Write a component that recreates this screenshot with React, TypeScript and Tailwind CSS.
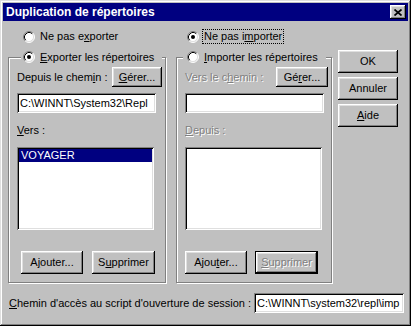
import React from "react";

const raised =
  "bg-[#c0c0c0] shadow-[inset_-1px_-1px_#000,inset_1px_1px_#fff,inset_-2px_-2px_#808080,inset_2px_2px_#dfdfdf]";
const sunken =
  "bg-white shadow-[inset_1px_1px_#808080,inset_-1px_-1px_#fff,inset_2px_2px_#000,inset_-2px_-2px_#dfdfdf]";
const grayed = "text-[#808080] [text-shadow:1px_1px_0_#fff]";

const Radio = ({ checked }: { checked?: boolean }) => (
  <svg width="12" height="12" viewBox="0 0 12 12" className="shrink-0">
    <circle cx="6" cy="6" r="5" fill="#fff" />
    <path d="M2.11 9.89 A5.5 5.5 0 0 1 9.89 2.11" stroke="#808080" fill="none" />
    <path d="M9.89 2.11 A5.5 5.5 0 0 1 2.11 9.89" stroke="#fff" fill="none" />
    <path d="M2.82 9.18 A4.5 4.5 0 0 1 9.18 2.82" stroke="#000" fill="none" />
    <path d="M9.18 2.82 A4.5 4.5 0 0 1 2.82 9.18" stroke="#dfdfdf" fill="none" />
    {checked && <circle cx="6" cy="6" r="2" fill="#000" />}
  </svg>
);

const Button = ({ children, className = "", disabled }: any) => (
  <div className={`${raised} h-[23px] flex items-center justify-center ${disabled ? grayed : ""} ${className}`}>
    {children}
  </div>
);

const Group = ({ label, children, className = "" }: any) => (
  <div className={`relative h-[226px] border border-[#808080] shadow-[inset_1px_1px_#fff,1px_1px_#fff] ${className}`}>
    {label}
    {children}
  </div>
);

export default function App() {
  return (
    <div className="w-[411px] h-[326px] p-[3px] flex flex-col bg-[#c0c0c0] text-black text-[11px] leading-[13px] font-['Liberation_Sans',Arial,sans-serif] shadow-[inset_-1px_-1px_#000,inset_1px_1px_#dfdfdf,inset_-2px_-2px_#808080,inset_2px_2px_#fff]">
      {/* title bar */}
      <div className="h-[18px] bg-[#000080] flex items-center pl-[3px] pr-[2px]">
        <span className="text-white font-bold text-[12px]">Duplication de répertoires</span>
        <div className={`${raised} ml-auto w-[16px] h-[14px] flex items-center justify-center`}>
          <svg width="8" height="7" viewBox="0 0 8 7">
            <path d="M0.5 0.5 L7.5 6.5 M7.5 0.5 L0.5 6.5" stroke="#000" strokeWidth="1.7" />
          </svg>
        </div>
      </div>

      <div className="flex pl-[5px]">
        <div className="w-[324px] flex flex-col">
          {/* radio row */}
          <div className="flex mt-[8px] h-[15px] items-center">
            <div className="w-[179px] pl-[15px] flex items-center gap-[5px]">
              <Radio />
              <span>
                Ne pas e<u>x</u>porter
              </span>
            </div>
            <div className="flex items-center gap-[3px]">
              <Radio checked />
              <span className="border border-dotted border-black px-[1px] h-[15px] flex items-center">
                Ne pas i<u>m</u>porter
              </span>
            </div>
          </div>

          {/* group boxes */}
          <div className="flex gap-[10px] mt-[13px]">
            <Group
              className="w-[158px]"
              label={
                <div className="absolute top-[-8px] left-[12px] bg-[#c0c0c0] pl-[2px] pr-[8px] h-[14px] flex items-center gap-[5px]">
                  <Radio checked />
                  <span>
                    <u>E</u>xporter les répertoires
                  </span>
                </div>
              }
            >
              <div className="flex flex-col pl-[8px] pt-[9px]">
                <div className="flex items-center h-[20px]">
                  <span>
                    Depuis le chem<u>i</u>n :
                  </span>
                  <Button className="ml-auto mr-[3px] w-[50px] !h-[20px]">
                    <span>
                      <u>G</u>érer...
                    </span>
                  </Button>
                </div>
                <div className={`${sunken} mt-[6px] w-[139px] h-[20px] px-[3px] flex items-center overflow-hidden whitespace-nowrap`}>
                  C:\WINNT\System32\Repl
                </div>
                <div className="mt-[11px] h-[13px]">
                  <u>V</u>ers :
                </div>
                <div className={`${sunken} mt-[10px] w-[137px] h-[83px] p-[2px]`}>
                  <div className="bg-[#000080] text-white h-[13px] px-[2px] flex items-center">VOYAGER</div>
                </div>
                <div className="flex mt-[21px] ml-[4px] gap-[9px]">
                  <Button className="w-[62px]">
                    <span>
                      A<u>j</u>outer...
                    </span>
                  </Button>
                  <Button className="w-[63px]">
                    <span>
                      S<u>u</u>pprimer
                    </span>
                  </Button>
                </div>
              </div>
            </Group>

            <Group
              className="w-[156px]"
              label={
                <div className="absolute top-[-8px] left-[6px] bg-[#c0c0c0] pl-[4px] pr-[8px] h-[14px] flex items-center gap-[5px]">
                  <Radio />
                  <span>
                    <u>I</u>mporter les répertoires
                  </span>
                </div>
              }
            >
              <div className="flex flex-col pl-[8px] pt-[9px]">
                <div className="flex items-center h-[20px]">
                  <span className={grayed}>
                    Vers le c<u>h</u>emin :
                  </span>
                  <Button className="ml-auto mr-[3px] w-[52px] !h-[20px]">
                    <span>
                      Gé<u>r</u>er...
                    </span>
                  </Button>
                </div>
                <div className={`${sunken} mt-[6px] w-[139px] h-[20px]`} />
                <div className={`mt-[11px] h-[13px] ${grayed}`}>
                  <u>D</u>epuis :
                </div>
                <div className={`${sunken} mt-[10px] w-[137px] h-[83px]`} />
                <div className="flex mt-[21px] gap-[8px]">
                  <Button className="w-[62px]">
                    <span>
                      Ajou<u>t</u>er...
                    </span>
                  </Button>
                  <div className="w-[63px] h-[23px] border border-black">
                    <Button className="w-full !h-full" disabled>
                      <span>
                        <u>S</u>upprimer
                      </span>
                    </Button>
                  </div>
                </div>
              </div>
            </Group>
          </div>
        </div>

        {/* side buttons */}
        <div className="ml-[6px] mt-[29px] w-[60px] flex flex-col gap-[4px]">
          <Button>OK</Button>
          <Button>Annuler</Button>
          <Button>
            <span>
              <u>A</u>ide
            </span>
          </Button>
        </div>
      </div>

      {/* bottom row */}
      <div className="flex items-center mt-[10px] pl-[6px] pr-[4px]">
        <span>
          <u>C</u>hemin d'accès au script d'ouverture de session :
        </span>
        <div className={`${sunken} ml-auto w-[150px] h-[20px] px-[3px] flex items-center overflow-hidden whitespace-nowrap`}>
          C:\WINNT\system32\repl\imp
        </div>
      </div>
    </div>
  );
}
